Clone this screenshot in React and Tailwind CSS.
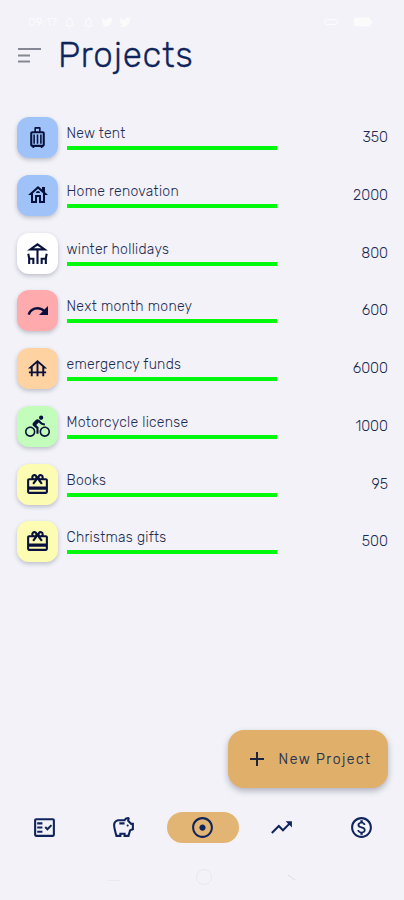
import {
  MdOutlineLuggage,
  MdOutlineHouse,
  MdOutlineDeck,
  MdRedo,
  MdFoundation,
  MdDirectionsBike,
  MdOutlineRedeem,
  MdAdd,
  MdOutlineFactCheck,
  MdOutlineSavings,
  MdAdjust,
  MdTrendingUp,
  MdOutlineMonetizationOn,
  MdOutlineNotifications,
  MdOutlineBatteryFull,
} from "react-icons/md";
import { FaTwitter } from "react-icons/fa";

const projects = [
  { name: "New tent", amount: 350, Icon: MdOutlineLuggage, size: 25, tile: "bg-[#9fc3f9]" },
  { name: "Home renovation", amount: 2000, Icon: MdOutlineHouse, size: 24, tile: "bg-[#9fc3f9]" },
  { name: "winter hollidays", amount: 800, Icon: MdOutlineDeck, size: 25, tile: "bg-white" },
  { name: "Next month money", amount: 600, Icon: MdRedo, size: 24, tile: "bg-[#ffabae]" },
  { name: "emergency funds", amount: 6000, Icon: MdFoundation, size: 23, tile: "bg-[#ffd3a1]" },
  { name: "Motorcycle license", amount: 1000, Icon: MdDirectionsBike, size: 25, tile: "bg-[#c3fdbb]" },
  { name: "Books", amount: 95, Icon: MdOutlineRedeem, size: 25, tile: "bg-[#fdfcb3]" },
  { name: "Christmas gifts", amount: 500, Icon: MdOutlineRedeem, size: 25, tile: "bg-[#fdfcb3]" },
];

function StatusBar() {
  return (
    <div className="flex h-[34px] items-end justify-between pb-[5px] pl-[28px] pr-[30px] text-white opacity-70">
      <div className="flex items-center gap-[6px]">
        <span className="text-[12px] leading-[14px]">09:17</span>
        <MdOutlineNotifications size={13} />
        <MdOutlineNotifications size={13} />
        <FaTwitter size={12} />
        <FaTwitter size={12} />
      </div>
      <div className="flex h-[14px] items-center gap-[14px]">
        <span className="h-[6px] w-[14px] rounded-full border border-white" />
        <MdOutlineBatteryFull className="rotate-90" size={22} />
      </div>
    </div>
  );
}

function ProjectRow({ name, amount, Icon, size, tile }) {
  return (
    <li className="flex h-[57.78px] items-start">
      <div className={`flex size-[41px] shrink-0 items-center justify-center rounded-[12px] text-[#08113c] shadow-[0_2px_4px_rgba(60,60,90,0.28)] ${tile}`}>
        <Icon size={size} />
      </div>
      <div className="ml-[8.5px] mt-[7px] w-[210px]">
        <div className="h-[22px] whitespace-nowrap text-[14px] font-light leading-[20px] tracking-[0.28px] text-[#1d2b52]">{name}</div>
        <div className="h-[4px] bg-[#00f80c]" />
      </div>
      <div className="ml-auto text-[14.5px] font-light leading-[41px] text-[#1d2b52]">{amount}</div>
    </li>
  );
}

export default function App() {
  return (
    <main className="flex h-[900px] w-[404px] flex-col overflow-hidden bg-[#f2f2f8] font-['Rubik','Inter',sans-serif] text-[#1d2b52]">
      <StatusBar />
      <header className="flex h-[42px] items-center pl-[18px]">
        <svg className="mt-[2px]" width="24" height="16" viewBox="0 0 24 16" fill="#858892">
          <rect y="0" width="23" height="2" />
          <rect y="6.5" width="12" height="2" />
          <rect y="12.5" width="12" height="2" />
        </svg>
        <h1 className="ml-[16px] text-[35px] font-light leading-[42px] tracking-[0.8px] text-[#10245c] [-webkit-text-stroke:0.3px_#10245c]">Projects</h1>
      </header>
      <ul className="mt-[41px] pl-[17px] pr-[16px]">
        {projects.map((p) => (
          <ProjectRow key={p.name} {...p} />
        ))}
      </ul>
      <button className="ml-auto mr-[16px] mt-auto flex h-[58px] w-[160px] shrink-0 items-center rounded-[16px] bg-[#e0b06b] pl-[17px] shadow-[0_3px_6px_rgba(60,60,90,0.35)]">
        <MdAdd size={24} className="text-[#1d2440]" />
        <span className="ml-[9.5px] whitespace-nowrap text-[14px] font-light tracking-[1.55px] text-[#24314f] [-webkit-text-stroke:0.2px_#24314f]">New Project</span>
      </button>
      <nav className="mt-[24px] flex h-[31px] shrink-0 items-center justify-between pl-[8px] pr-[7px] text-[#10245c]">
        <span className="flex w-[72px] justify-center"><MdOutlineFactCheck size={25} /></span>
        <span className="flex w-[72px] justify-center"><MdOutlineSavings size={25} /></span>
        <span className="flex h-[31px] w-[72px] items-center justify-center rounded-full bg-[#e3b574]"><MdAdjust size={25} /></span>
        <span className="flex w-[72px] justify-center"><MdTrendingUp size={25} /></span>
        <span className="flex w-[72px] justify-center"><MdOutlineMonetizationOn size={25} /></span>
      </nav>
      <div className="mb-[14px] mt-[25px] flex h-[18px] shrink-0 items-center justify-between px-[108px]">
        <span className="h-[8px] w-[12px] border-b border-[#e9e9ef]" />
        <span className="size-[16px] rounded-full border border-[#e8e8ed]" />
        <span className="h-[1px] w-[9px] rotate-[35deg] bg-[#dedee4]" />
      </div>
    </main>
  );
}
